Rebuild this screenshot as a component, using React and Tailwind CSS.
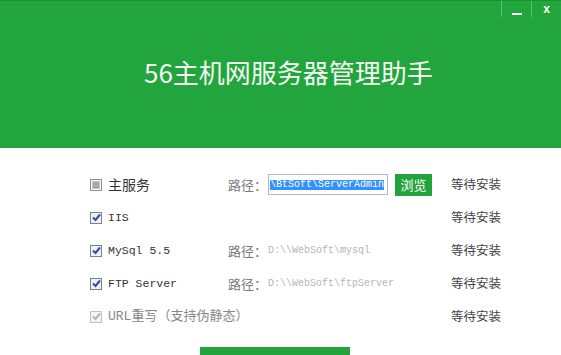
import React from 'react'

const cjk = '"Noto Sans CJK SC", "Liberation Sans", sans-serif'
const mono = '"Liberation Mono", "Noto Sans CJK SC", monospace'

function Box({ state }) {
  // state: 'mixed' | 'checked' | 'disabled'
  if (state === 'mixed') {
    return (
      <span className="w-[12px] h-[12px] border border-[#8f8f8f] bg-white flex items-center justify-center shrink-0">
        <span className="w-[8px] h-[8px] bg-[#a9a9a9] border border-[#c4c4c4]" />
      </span>
    )
  }
  const dis = state === 'disabled'
  return (
    <span className={`w-[12px] h-[12px] border flex items-center justify-center shrink-0 ${dis ? 'border-[#c0c0c0] bg-[#f4f4f4]' : 'border-[#7d7f94] bg-[#eef0f4]'}`}>
      <svg width="9" height="9" viewBox="0 0 9 9">
        <path d="M1 4.5 L3.5 7 L8 1.5" fill="none" stroke={dis ? '#b4b4b4' : '#2d4fa0'} strokeWidth="2" />
      </svg>
    </span>
  )
}

function Row({ state, label, labelMono, labelClass, path, input, status }) {
  return (
    <div className="h-[33px] flex items-center">
      <div className="w-[138px] flex items-center gap-[6px] whitespace-nowrap">
        <Box state={state} />
        <span className={labelClass} style={{ fontFamily: labelMono ? mono : cjk }}>{label}</span>
      </div>
      <div className="w-[223px] flex items-center">
        {(path || input) && (
          <span className="w-[40px] text-[13px] text-[#7a7a7a]" style={{ fontFamily: cjk }}>路径：</span>
        )}
        {input && (
          <>
            <div className="w-[120px] h-[21px] border border-[#a9b7c6] bg-white flex items-center pl-[1px] overflow-hidden">
              <span className="bg-[#3390ff] text-white text-[10px] leading-[10px] whitespace-nowrap" style={{ fontFamily: mono }}>\BtSoft\ServerAdmin</span>
            </div>
            <button className="ml-[7px] w-[37px] h-[22px] bg-[#22a33c] text-white text-[13px]" style={{ fontFamily: cjk }}>浏览</button>
          </>
        )}
        {path && (
          <span className="text-[10px] text-[#b5b5b5] whitespace-nowrap" style={{ fontFamily: mono }}>{path}</span>
        )}
      </div>
      <span className="text-[12.5px] text-[#444]" style={{ fontFamily: cjk }}>{status}</span>
    </div>
  )
}

export default function App() {
  return (
    <div className="w-[561px] h-[355px] overflow-hidden bg-white">
      <header className="relative h-[148px] bg-[#22a53c] border-t border-[#1c8f33] flex items-center pl-[144px]">
        <h1 className="text-[26px] text-[#f4f8f4] -mt-[6px]" style={{ fontFamily: cjk }}>56主机网服务器管理助手</h1>
        <div className="absolute top-0 right-0 flex h-[16px]">
          <span className="w-[30px] border-l border-[#5cc26f] flex items-end justify-center pb-[2px]">
            <span className="w-[10px] h-[2px] bg-white" />
          </span>
          <span className="w-[30px] border-l border-[#5cc26f] flex items-center justify-center text-white text-[12px] font-bold leading-none" style={{ fontFamily: '"Liberation Sans", sans-serif' }}>x</span>
        </div>
      </header>
      <main className="pl-[90px] pt-[20px]">
        <Row state="mixed" label="主服务" labelClass="text-[14px] text-[#333]" input status="等待安装" />
        <Row state="checked" label="IIS" labelMono labelClass="text-[11.5px] text-[#333]" status="等待安装" />
        <Row state="checked" label="MySql 5.5" labelMono labelClass="text-[11.5px] text-[#333]" path="D:\\WebSoft\mysql" status="等待安装" />
        <Row state="checked" label="FTP Server" labelMono labelClass="text-[11.5px] text-[#333]" path="D:\\WebSoft\ftpServer" status="等待安装" />
        <Row state="disabled" label="URL重写（支持伪静态）" labelMono labelClass="text-[13px] text-[#888]" status="等待安装" />
      </main>
      <div className="mt-[14px] ml-[200px] w-[150px] h-[40px] bg-[#22a33c]" />
    </div>
  )
}
